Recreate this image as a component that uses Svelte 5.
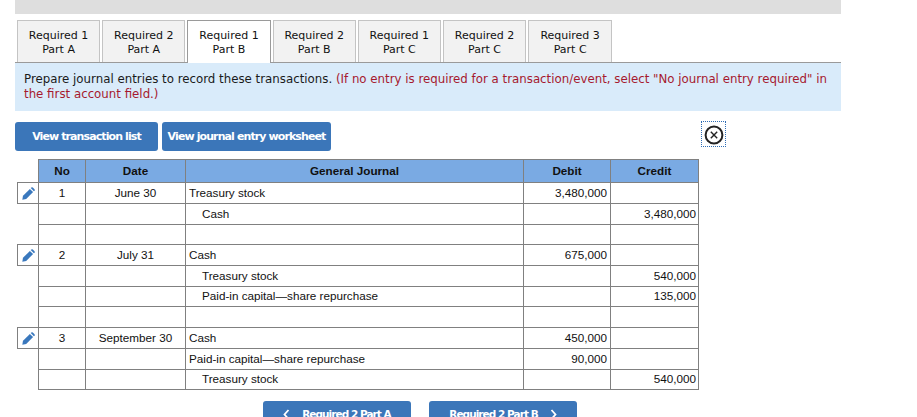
<script>
	const tabs = [
		['Required 1', 'Part A'],
		['Required 2', 'Part A'],
		['Required 1', 'Part B'],
		['Required 2', 'Part B'],
		['Required 1', 'Part C'],
		['Required 2', 'Part C'],
		['Required 3', 'Part C']
	];
	const activeTab = 2;

	const rows = [
		{ edit: true, no: '1', date: 'June 30', account: 'Treasury stock', debit: '3,480,000' },
		{ account: 'Cash', indent: true, credit: '3,480,000' },
		{},
		{ edit: true, no: '2', date: 'July 31', account: 'Cash', debit: '675,000' },
		{ account: 'Treasury stock', indent: true, credit: '540,000' },
		{ account: 'Paid-in capital—share repurchase', indent: true, credit: '135,000' },
		{},
		{ edit: true, no: '3', date: 'September 30', account: 'Cash', debit: '450,000' },
		{ account: 'Paid-in capital—share repurchase', debit: '90,000' },
		{ account: 'Treasury stock', indent: true, credit: '540,000' }
	];
</script>

<div class="page">
	<div class="topbar"></div>

	<div class="tabs">
		{#each tabs as tab, i}
			<div class="tab" class:active={i === activeTab}>
				<span>{tab[0]}</span>
				<span>{tab[1]}</span>
			</div>
		{/each}
	</div>

	<div class="notice">
		Prepare journal entries to record these transactions.
		<span class="red">(If no entry is required for a transaction/event, select "No journal entry required" in the first account field.)</span>
	</div>

	<div class="actions">
		<button class="btn first">View transaction list</button>
		<button class="btn second">View journal entry worksheet</button>
		<div class="close">
			<svg width="20" height="20" viewBox="0 0 20 20">
				<circle cx="10" cy="10" r="8.4" fill="none" stroke="#222" stroke-width="2" />
				<path d="M6.8 6.8l6.4 6.4M13.2 6.8l-6.4 6.4" stroke="#222" stroke-width="1.4" />
			</svg>
		</div>
	</div>

	<table>
		<colgroup>
			<col class="c-edit" />
			<col class="c-no" />
			<col class="c-date" />
			<col class="c-acct" />
			<col class="c-debit" />
			<col class="c-credit" />
		</colgroup>
		<thead>
			<tr>
				<th class="blank"></th>
				<th>No</th>
				<th>Date</th>
				<th>General Journal</th>
				<th>Debit</th>
				<th>Credit</th>
			</tr>
		</thead>
		<tbody>
			{#each rows as row}
				<tr>
					{#if row.edit}
						<td class="edit">
							<svg width="13" height="13" viewBox="0 0 13 13">
								<path d="M0.3 12.7l0.7-3.9 6.9-6.9 3.2 3.2-6.9 6.9z" fill="#3a78bd" />
								<path d="M8.7 1.1l0.6-0.6a1.1 1.1 0 0 1 1.5 0l1.7 1.7a1.1 1.1 0 0 1 0 1.5l-0.6 0.6z" fill="#3a78bd" />
							</svg>
						</td>
					{:else}
						<td class="blank"></td>
					{/if}
					<td class="center">{row.no ?? ''}</td>
					<td class="center">{row.date ?? ''}</td>
					<td class:indent={row.indent}>{row.account ?? ''}</td>
					<td class="num">{row.debit ?? ''}</td>
					<td class="num credit">{row.credit ?? ''}</td>
				</tr>
			{/each}
		</tbody>
	</table>

	<div class="pager">
		<button class="btn nav">
			<svg class="chev" width="7" height="11" viewBox="0 0 7 11"><path d="M5.5 1L1.5 5.5l4 4.5" /></svg>
			<span>Required 2 Part A</span>
		</button>
		<button class="btn nav">
			<span>Required 2 Part B</span>
			<svg class="chev" width="7" height="11" viewBox="0 0 7 11"><path d="M1.5 1l4 4.5-4 4.5" /></svg>
		</button>
	</div>
</div>

<style>
	:global(body) {
		background: #fff;
		overflow: hidden;
	}

	.page {
		width: 917px;
		height: 417px;
		overflow: hidden;
		padding-left: 15px;
		box-sizing: border-box;
	}

	.topbar {
		width: 826px;
		height: 14px;
		background: #dedede;
	}

	.tabs {
		display: flex;
		gap: 2px;
		width: 824px;
		height: 42px;
		margin-top: 6px;
		padding-left: 2px;
	}

	.tab {
		display: flex;
		flex-direction: column;
		align-items: center;
		justify-content: center;
		width: 83.2px;
		height: 42px;
		box-sizing: border-box;
		padding-top: 2px;
		background: #f2f2f2;
		border: 1px solid #c4c4c4;
		border-bottom: none;
		font: 11px/14px 'DejaVu Sans', Verdana, sans-serif;
		color: #111;
	}

	.tab:last-child {
		width: 84px;
	}

	.tab.active {
		position: relative;
		height: 43px;
		padding-bottom: 1px;
		background: #fff;
		border: 1px solid #9a9a9a;
		border-bottom: none;
		z-index: 1;
	}

	.notice {
		width: 826px;
		height: 49px;
		box-sizing: border-box;
		padding: 9px 9px 0;
		background: #d9ebfa;
		border-top: 1px solid #9a9a9a;
		font: 11.8px/15px 'DejaVu Sans', Verdana, sans-serif;
		color: #1a1a1a;
	}

	.red {
		color: #a6192e;
	}

	.actions {
		display: flex;
		align-items: flex-start;
		gap: 4px;
		width: 711px;
		height: 37px;
		margin-top: 11px;
	}

	.btn {
		height: 29px;
		padding: 0;
		border: none;
		border-radius: 3px;
		background: #3b76b9;
		color: #fff;
		font: bold 11px 'DejaVu Sans', Verdana, sans-serif;
		letter-spacing: -0.9px;
		white-space: nowrap;
	}

	.first {
		width: 143px;
	}

	.second {
		width: 169px;
	}

	.close {
		display: flex;
		align-items: center;
		justify-content: center;
		width: 25px;
		height: 26px;
		margin-left: auto;
		margin-top: -1px;
		padding-top: 1px;
		box-sizing: border-box;
		border: 1px dotted #2f6db5;
	}

	table {
		width: 681px;
		margin-left: 2px;
		border-collapse: collapse;
		table-layout: fixed;
		font: 11.7px 'Liberation Sans', Arial, sans-serif;
		color: #111;
	}

	.c-edit { width: 21px; }
	.c-no { width: 47px; }
	.c-date { width: 100px; }
	.c-acct { width: 338px; }
	.c-debit { width: 87px; }
	.c-credit { width: 88px; }

	th, td {
		padding: 0 3px 2px;
		border: 1px solid #808080;
		white-space: nowrap;
	}

	th {
		height: 20px;
		background: #7aaae3;
		font-weight: bold;
		text-align: center;
	}

	td {
		height: 18px;
	}

	tbody tr:nth-child(3) td,
	tbody tr:nth-child(6) td,
	tbody tr:last-child td {
		height: 17px;
	}

	th.blank, td.blank {
		background: none;
		border-top: none;
		border-bottom: none;
		border-left: none;
	}

	td.edit {
		padding: 0;
	}

	td.edit svg {
		display: block;
		margin: 0 auto;
	}

	.center {
		text-align: center;
	}

	.num {
		text-align: right;
	}

	.credit {
		padding-right: 2px;
	}

	.indent {
		padding-left: 16px;
	}

	.pager {
		display: flex;
		justify-content: center;
		gap: 18px;
		width: 810px;
		margin-top: 11px;
	}

	.nav {
		display: flex;
		align-items: center;
		justify-content: center;
		gap: 12px;
		width: 148px;
		flex: none;
		padding-bottom: 3px;
		font-size: 10.5px;
		letter-spacing: -0.95px;
	}

	.chev {
		fill: none;
		stroke: #fff;
		stroke-width: 1.8;
	}
</style>
